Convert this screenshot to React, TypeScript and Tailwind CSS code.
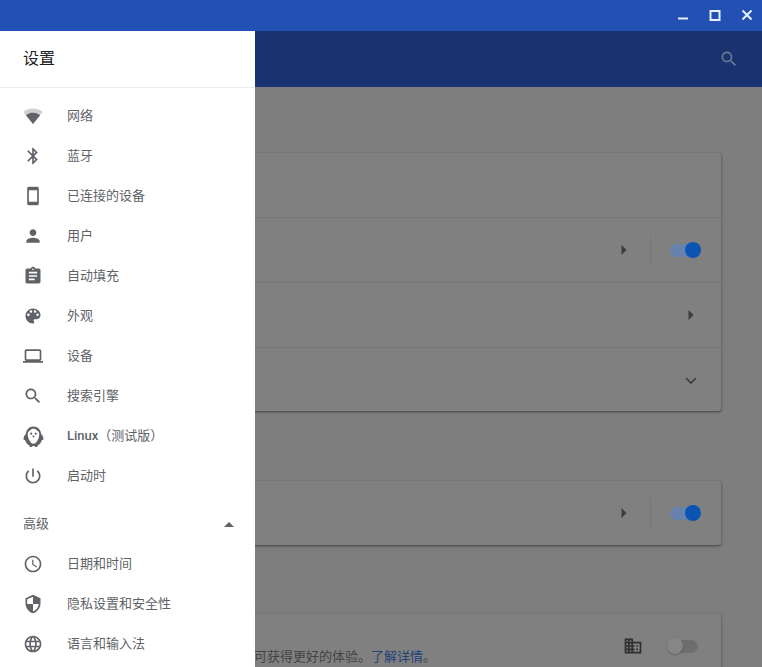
const CJK = "font-['Roboto','Noto_Sans_CJK_SC',sans-serif]";

const icons = {
  bluetooth:
    "M17.71 7.71L12 2h-1v7.59L6.41 5 5 6.41 10.59 12 5 17.59 6.41 19 11 14.41V22h1l5.71-5.71-4.3-4.29 4.3-4.29zM13 5.83l1.88 1.88L13 9.59V5.83zm1.88 10.46L13 18.17v-3.76l1.88 1.88z",
  phone:
    "M17 1.01L7 1c-1.1 0-2 .9-2 2v18c0 1.1.9 2 2 2h10c1.1 0 2-.9 2-2V3c0-1.1-.9-1.99-2-1.99zM17 19H7V5h10v14z",
  person:
    "M12 12c2.21 0 4-1.79 4-4s-1.79-4-4-4-4 1.79-4 4 1.79 4 4 4zm0 2c-2.67 0-8 1.34-8 4v2h16v-2c0-2.66-5.33-4-8-4z",
  assignment:
    "M19 3h-4.18C14.4 1.84 13.3 1 12 1c-1.3 0-2.4.84-2.82 2H5c-1.1 0-2 .9-2 2v14c0 1.1.9 2 2 2h14c1.1 0 2-.9 2-2V5c0-1.1-.9-2-2-2zm-7 0c.55 0 1 .45 1 1s-.45 1-1 1-1-.45-1-1 .45-1 1-1zm2 14H7v-2h7v2zm3-4H7v-2h10v2zm0-4H7V7h10v2z",
  palette:
    "M12 3c-4.97 0-9 4.03-9 9s4.03 9 9 9c.83 0 1.5-.67 1.5-1.5 0-.39-.15-.74-.39-1.01-.23-.26-.38-.61-.38-.99 0-.83.67-1.5 1.5-1.5H16c2.76 0 5-2.24 5-5 0-4.42-4.03-8-9-8zm-5.5 9c-.83 0-1.5-.67-1.5-1.5S5.67 9 6.5 9 8 9.67 8 10.5 7.33 12 6.5 12zm3-4C8.67 8 8 7.33 8 6.5S8.67 5 9.5 5s1.5.67 1.5 1.5S10.33 8 9.5 8zm5 0c-.83 0-1.5-.67-1.5-1.5S13.67 5 14.5 5s1.5.67 1.5 1.5S15.33 8 14.5 8zm3 4c-.83 0-1.5-.67-1.5-1.5S16.67 9 17.5 9s1.5.67 1.5 1.5-.67 1.5-1.5 1.5z",
  laptop:
    "M20 18c1.1 0 1.99-.9 1.99-2L22 6c0-1.1-.9-2-2-2H4c-1.1 0-2 .9-2 2v10c0 1.1.9 2 2 2H0v2h24v-2h-4zM4 6h16v10H4V6z",
  search:
    "M15.5 14h-.79l-.28-.27C15.41 12.59 16 11.11 16 9.5 16 5.91 13.09 3 9.5 3S3 5.91 3 9.5 5.91 16 9.5 16c1.61 0 3.09-.59 4.23-1.57l.27.28v.79l5 4.99L20.49 19l-4.99-5zm-6 0C7.01 14 5 11.99 5 9.5S7.01 5 9.5 5 14 7.01 14 9.5 11.99 14 9.5 14z",
  power:
    "M13 3h-2v10h2V3zm4.83 2.17l-1.42 1.42C17.99 7.86 19 9.81 19 12c0 3.87-3.13 7-7 7s-7-3.13-7-7c0-2.19 1.01-4.14 2.58-5.42L6.17 5.17C4.23 6.82 3 9.26 3 12c0 4.97 4.03 9 9 9s9-4.03 9-9c0-2.74-1.23-5.18-3.17-6.83z",
  clock:
    "M11.99 2C6.47 2 2 6.48 2 12s4.47 10 9.99 10C17.52 22 22 17.52 22 12S17.52 2 11.99 2zM12 20c-4.42 0-8-3.58-8-8s3.58-8 8-8 8 3.58 8 8-3.58 8-8 8zM12.5 7H11v6l5.25 3.15.75-1.23-4.5-2.67z",
  security:
    "M12 1L3 5v6c0 5.55 3.84 10.74 9 12 5.16-1.26 9-6.45 9-12V5l-9-4zm0 10.99h7c-.53 4.12-3.28 7.79-7 8.94V12H5V6.3l7-3.11v8.8z",
  language:
    "M11.99 2C6.47 2 2 6.48 2 12s4.47 10 9.99 10C17.52 22 22 17.52 22 12S17.52 2 11.99 2zm6.93 6h-2.95c-.32-1.25-.78-2.45-1.38-3.56 1.84.63 3.37 1.91 4.33 3.56zM12 4.04c.83 1.2 1.48 2.53 1.91 3.96h-3.82c.43-1.43 1.08-2.76 1.91-3.96zM4.26 14C4.1 13.36 4 12.69 4 12s.1-1.36.26-2h3.38c-.08.66-.14 1.32-.14 2 0 .68.06 1.34.14 2H4.26zm.82 2h2.95c.32 1.25.78 2.45 1.38 3.56-1.84-.63-3.37-1.9-4.33-3.56zm2.95-8H5.08c.96-1.66 2.49-2.93 4.33-3.56C8.81 5.55 8.35 6.75 8.03 8zM12 19.96c-.83-1.2-1.48-2.53-1.91-3.96h3.82c-.43 1.43-1.08 2.76-1.91 3.96zM14.34 14H9.66c-.09-.66-.16-1.32-.16-2 0-.68.07-1.35.16-2h4.68c.09.65.16 1.32.16 2 0 .68-.07 1.34-.16 2zm.25 5.56c.6-1.11 1.06-2.31 1.38-3.56h2.95c-.96 1.65-2.49 2.93-4.33 3.56zM16.36 14c.08-.66.14-1.32.14-2 0-.68-.06-1.34-.14-2h3.38c.16.64.26 1.31.26 2s-.1 1.36-.26 2h-3.38z",
  domain:
    "M12 7V3H2v18h20V7H12zM6 19H4v-2h2v2zm0-4H4v-2h2v2zm0-4H4V9h2v2zm0-4H4V5h2v2zm4 12H8v-2h2v2zm0-4H8v-2h2v2zm0-4H8V9h2v2zm0-4H8V5h2v2zm10 12h-8v-2h2v-2h-2v-2h2v-2h-2V9h8v10zm-2-8h-2v2h2v-2zm0 4h-2v2h2v-2z",
};

function Icon({ d, className = "" }: { d: string; className?: string }) {
  return (
    <svg viewBox="0 0 24 24" className={`size-5 fill-current ${className}`}>
      <path d={d} />
    </svg>
  );
}

function WifiIcon() {
  return (
    <svg viewBox="0 0 24 24" className="size-5 fill-current">
      <path
        opacity="0.3"
        d="M12.01 21.49L23.64 7c-.45-.34-4.93-4-11.64-4C5.28 3 .81 6.66.36 7l11.63 14.49.01.01.01-.01z"
      />
      <path d="M3.53 10.95l8.46 10.54.01.01.01-.01 8.46-10.54C20.04 10.62 16.81 8 12 8c-4.81 0-8.04 2.62-8.47 2.95z" />
    </svg>
  );
}

function PenguinIcon() {
  return (
    <svg viewBox="0 0 24 24" className="size-[23px] shrink-0">
      <path
        fill="currentColor"
        d="M12 1.5c-4.6 0-7.6 3.4-7.9 7.6C2.6 10.6 1.6 12.6 1.6 14.6c0 1.1.7 1.4 1.6.9.6 2.8 2.3 5 4.6 6-.5.8 0 1.4 1.2 1.4 1 0 1.9-.4 2.1-1h1.8c.2.6 1.1 1 2.1 1 1.2 0 1.7-.6 1.2-1.4 2.3-1 4-3.2 4.6-6 .9.5 1.6.2 1.6-.9 0-2-1-4-2.5-5.5C19.6 4.9 16.6 1.5 12 1.5z"
      />
      <path
        fill="#fff"
        d="M12 3.8c-1.6 0-2.9.7-3.7 1.9-2 .7-2.6 3-2.2 5.6.5 3.7 2.8 8.2 5.9 8.2s5.4-4.5 5.9-8.2c.4-2.6-.2-4.9-2.2-5.6-.8-1.2-2.1-1.9-3.7-1.9z"
      />
      <circle cx="9.6" cy="9" r="1.1" fill="currentColor" />
      <circle cx="14.4" cy="9" r="1.1" fill="currentColor" />
      <path fill="currentColor" d="M10.4 11.2h3.2L12 13.2z" />
    </svg>
  );
}

function ArrowRight({ className = "" }: { className?: string }) {
  return (
    <svg viewBox="0 0 6 10" className={`h-[10px] w-[6px] fill-[#3c3c3c] ${className}`}>
      <path d="M0.5 0L5.5 5L0.5 10z" />
    </svg>
  );
}

function ToggleOn() {
  return (
    <div className="relative h-[13px] w-[26px] rounded-full bg-[#6783ad]">
      <div className="absolute -right-[5px] -top-[1.5px] size-4 rounded-full bg-[#0c54b4]" />
    </div>
  );
}

function Separator() {
  return <div className="ml-[23px] mr-[19px] h-[30px] w-px bg-[#777777]" />;
}

function NavRow({ icon, label }: { icon: React.ReactNode; label: React.ReactNode }) {
  return (
    <div className="flex h-10 items-center pl-[21px] text-[#5f6368]">
      <div className="flex size-6 items-center justify-center">{icon}</div>
      <span className="ml-[22px] text-[13px] leading-5 [text-spacing-trim:space-all]">{label}</span>
    </div>
  );
}

function Card({ className = "", children }: { className?: string; children: React.ReactNode }) {
  return (
    <div className={`w-[680px] rounded-[3px] bg-[#808080] shadow-[0_1px_2px_rgba(0,0,0,0.35),0_1px_3px_1px_rgba(0,0,0,0.12)] ${className}`}>
      {children}
    </div>
  );
}

export default function App() {
  return (
    <div className={`flex h-[667px] w-[762px] flex-col overflow-hidden bg-[#7e7e7e] ${CJK}`}>
      <div className="flex h-[31px] shrink-0 items-center justify-end bg-[#2350b3] text-[#e8f0fe]">
        <svg viewBox="0 0 96 31" className="h-[31px] w-[96px]">
          <rect x="12" y="17.5" width="10" height="2" fill="currentColor" />
          <rect x="44.5" y="11" width="9" height="9" fill="none" stroke="currentColor" strokeWidth="2" />
          <path d="M76.5 10.5l9 9m0-9l-9 9" stroke="currentColor" strokeWidth="2" fill="none" />
        </svg>
      </div>

      <div className="relative flex-1 overflow-hidden">
        <div className="flex h-14 items-center justify-end bg-[#1a3370] pr-[23px] text-[#69778f]">
          <Icon d={icons.search} />
        </div>

        <div className="flex flex-col pl-[41px] pt-[66px]">
          <Card className="h-[258px]">
            <div className="h-[65px] border-b border-[#787878]" />
            <div className="flex h-[65px] items-center justify-end border-b border-[#787878] pr-5">
              <ArrowRight />
              <Separator />
              <ToggleOn />
              <div className="w-[5px]" />
            </div>
            <div className="flex h-[65px] items-center justify-end border-b border-[#787878] pr-[27px]">
              <ArrowRight />
            </div>
            <div className="flex h-[63px] items-center justify-end pr-[24px]">
              <svg viewBox="0 0 12 8" className="mt-[2px] h-2 w-3 fill-none stroke-[#3c3c3c] stroke-[1.6]">
                <path d="M1 1l5 5 5-5" />
              </svg>
            </div>
          </Card>

          <Card className="mt-[70px] flex h-[64px] items-center justify-end pr-5">
            <ArrowRight />
            <Separator />
            <ToggleOn />
            <div className="w-[5px]" />
          </Card>

          <Card className="mt-[69px] flex h-[80px] items-start pt-[22px] pr-[23px]">
            <p className="ml-[213px] mt-[11px] text-[13px] leading-5 text-[#444444]">
              可获得更好的体验。<span className="text-[#24427a]">了解详情</span>。
            </p>
            <div className="ml-auto flex items-center">
              <Icon d={icons.domain} className="text-[#2f2f2f]" />
              <div className="relative ml-[27px] h-[13px] w-7 rounded-full bg-[#6e6e6e]">
                <div className="absolute -left-[3px] -top-[1.5px] size-4 rounded-full bg-[#868686] shadow-[0_1px_2px_rgba(0,0,0,0.25)]" />
              </div>
            </div>
          </Card>
        </div>

        {/* drawer lies over the dimmed page */}
        <div className="absolute inset-y-0 left-0 w-[255px] bg-white">
          <div className="flex h-[57px] items-center border-b border-[#e8eaed] pl-[23px] text-base text-[#202124]">
            设置
          </div>
          <div className="pt-2">
            <NavRow icon={<WifiIcon />} label="网络" />
            <NavRow icon={<Icon d={icons.bluetooth} />} label="蓝牙" />
            <NavRow icon={<Icon d={icons.phone} />} label="已连接的设备" />
            <NavRow icon={<Icon d={icons.person} />} label="用户" />
            <NavRow icon={<Icon d={icons.assignment} />} label="自动填充" />
            <NavRow icon={<Icon d={icons.palette} />} label="外观" />
            <NavRow icon={<Icon d={icons.laptop} />} label="设备" />
            <NavRow icon={<Icon d={icons.search} />} label="搜索引擎" />
            <NavRow
              icon={<PenguinIcon />}
              label={
                <>
                  <span className="font-medium">Linux</span>（测试版）
                </>
              }
            />
            <NavRow icon={<Icon d={icons.power} />} label="启动时" />
          </div>
          <div className="mt-2 flex h-10 items-center justify-between pl-[23px] pr-[21px] text-[13px] text-[#5f6368]">
            高级
            <svg viewBox="0 0 10 5" className="h-[5px] w-[10px] fill-current">
              <path d="M0 5L5 0l5 5z" />
            </svg>
          </div>
          <NavRow icon={<Icon d={icons.clock} />} label="日期和时间" />
          <NavRow icon={<Icon d={icons.security} />} label="隐私设置和安全性" />
          <NavRow icon={<Icon d={icons.language} />} label="语言和输入法" />
        </div>
      </div>
    </div>
  );
}
